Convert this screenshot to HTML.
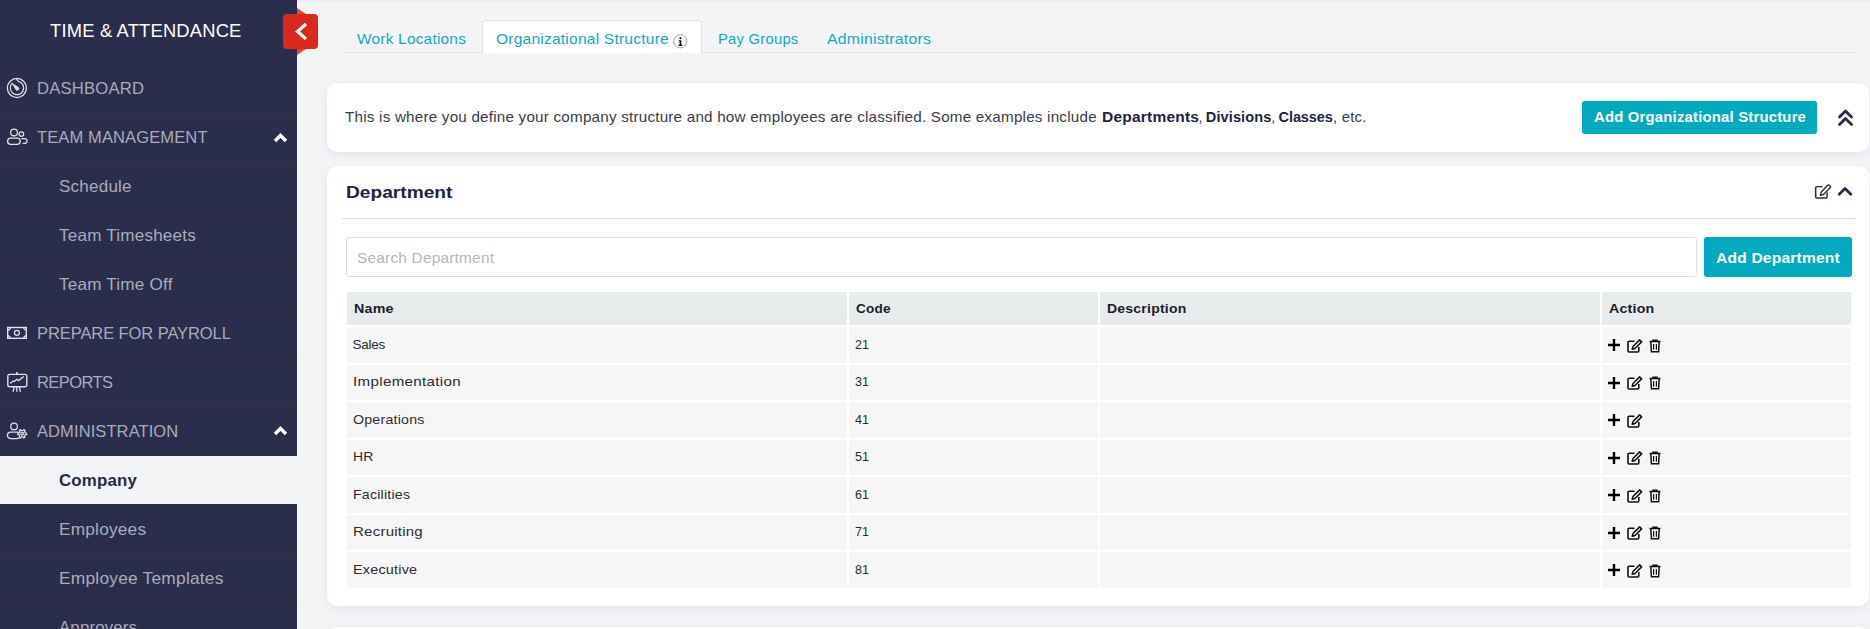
<!DOCTYPE html>
<html><head><meta charset="utf-8">
<style>
*{box-sizing:border-box;margin:0;padding:0}
html,body{width:1870px;height:629px;overflow:hidden;background:#f3f4f6;font-family:"Liberation Sans",sans-serif;}
.tx{position:absolute;white-space:nowrap;line-height:20px;z-index:3;}
#side{position:absolute;left:0;top:0;width:297px;height:629px;background:#2b2e4a;}
.sep{position:absolute;left:0;width:297px;height:1px;background:#343439;}
#act{position:absolute;left:0;top:455.5px;width:297px;height:48.5px;background:#f2f3f5;}
.sic{position:absolute;}
.car{position:absolute;}
#tog{position:absolute;left:283px;top:8px;z-index:5;}
#tabline{position:absolute;left:342px;top:52px;width:1513px;height:1px;background:#e2e4e8;}
#acttab{position:absolute;left:481.5px;top:20px;width:220px;height:33px;background:#fff;border:1px solid #dee2e6;border-bottom:none;border-radius:4px 4px 0 0;}
#info{position:absolute;left:673px;top:34px;z-index:4}
.card{position:absolute;left:327px;width:1542px;background:#fff;border-radius:10px;box-shadow:0 3px 9px rgba(40,60,100,0.075);}
#c1{top:83px;height:69px;}
#c2{top:166px;height:440px;}
#c3{top:627px;height:40px;}
.btn{position:absolute;background:#02aac0;border-radius:3px;}
#topsh{position:absolute;left:297px;top:0;width:1573px;height:3px;background:linear-gradient(#e8e9eb,#f3f4f6);}
#addorgb{left:1582px;top:101px;width:235px;height:33px;}
#dchev{position:absolute;left:1837px;top:108px;}
#hline{position:absolute;left:342px;top:218px;width:1513px;height:1px;background:#dcdde0;}
#search{position:absolute;left:346px;top:237px;width:1351px;height:40px;border:1px solid #dcdde1;border-radius:3px;background:#fff;}
#adddepb{left:1704px;top:237px;width:148px;height:40px;}
#hedit{position:absolute;left:1814px;top:184px;}
#hchev{position:absolute;left:1837px;top:185px;}
.th{position:absolute;top:292px;height:33px;background:#e8ebec;}
.td{position:absolute;height:35.5px;background:#f6f6f6;}
.td svg{position:absolute;top:11.5px;}
.td .ip{top:12px;}
.td .ip{left:6px;}
.td .ie{left:25px;}
.td .it{left:47px;}
</style></head><body>
<div id="side">
<div class="sep" style="top:112px"></div><div class="sep" style="top:161px"></div><div class="sep" style="top:210px"></div><div class="sep" style="top:259px"></div><div class="sep" style="top:308px"></div><div class="sep" style="top:357px"></div><div class="sep" style="top:406px"></div><div class="sep" style="top:553px"></div><div class="sep" style="top:602px"></div>
<div id="act"></div>

<svg class="sic" style="left:5px;top:76px" width="24" height="24" viewBox="0 0 24 24" fill="none" stroke="#dfe0e8" stroke-width="1.25">
 <circle cx="11.9" cy="12" r="9.55"/>
 <path d="M11.5 2.6 C11.9 4.4 12.6 5.3 14.07 5.63 A6.7 6.7 0 1 1 7.52 7.02"/>
 <path d="M7.3 7.4 L10.9 13.8 A1.75 1.75 0 1 0 13.4 11.3 Z" fill="#dfe0e8" stroke-width="0.6"/>
</svg>
<svg class="sic" style="left:5px;top:125px" width="24" height="24" viewBox="0 0 24 24" fill="none" stroke="#dfe0e8" stroke-width="1.25">
 <circle cx="9.05" cy="7.5" r="3.4"/>
 <circle cx="16.4" cy="9.1" r="2.3"/>
 <rect x="2.6" y="13.2" width="12.6" height="6.2" rx="3.1"/>
 <path d="M16.3 13.5 H19.6 a2.4 2.4 0 0 1 0 4.8 H17.6"/>
</svg>
<svg class="sic" style="left:5px;top:321px" width="24" height="24" viewBox="0 0 24 24" fill="none" stroke="#dfe0e8" stroke-width="1.4">
 <rect x="2.7" y="6.5" width="18.6" height="10.8"/>
 <path d="M2.7 9.1 A2.6 2.6 0 0 0 5.3 6.5 M18.7 6.5 A2.6 2.6 0 0 0 21.3 9.1 M21.3 14.7 A2.6 2.6 0 0 0 18.7 17.3 M5.3 17.3 A2.6 2.6 0 0 0 2.7 14.7" stroke-width="1.2"/>
 <circle cx="11.9" cy="11.8" r="2.5" stroke-width="1.3"/>
</svg>
<svg class="sic" style="left:5px;top:370px" width="24" height="24" viewBox="0 0 24 24" fill="none" stroke="#dfe0e8" stroke-width="1.4">
 <rect x="2.8" y="4.4" width="19" height="12.4" rx="2"/>
 <path d="M11.9 2 v2.5" stroke-width="1.6"/>
 <path d="M5.1 13.5 L8 11.1 L9.4 11.3 L11.8 9.3 L13.5 10.6 L18.7 6.5" stroke-width="1.3"/>
 <path d="M9.2 17 L8 21.8 M11.8 17 V21.8 M14.4 17 L15.4 21.8" stroke-width="1.3"/>
</svg>
<svg class="sic" style="left:5px;top:419px" width="24" height="24" viewBox="0 0 24 24" fill="none" stroke="#dfe0e8" stroke-width="1.25">
 <circle cx="9.07" cy="7.4" r="3.3"/>
 <rect x="2.5" y="13.2" width="12.8" height="6.3" rx="3.15"/>
 <path d="M20.26 13.88 L21.64 14.05 L21.64 15.55 L20.26 15.72 L19.53 16.99 L20.07 18.27 L18.77 19.02 L17.93 17.92 L16.47 17.92 L15.63 19.02 L14.33 18.27 L14.87 16.99 L14.14 15.72 L12.76 15.55 L12.76 14.05 L14.14 13.88 L14.87 12.61 L14.33 11.33 L15.63 10.58 L16.47 11.68 L17.93 11.68 L18.77 10.58 L20.07 11.33 L19.53 12.61Z" fill="#2b2e4a" stroke-linejoin="round"/>
 <circle cx="17.2" cy="14.8" r="1.4"/>
</svg>
<svg class="car" style="left:273px;top:132px" width="15" height="11" viewBox="0 0 15 11"><path d="M2 9 L7.5 3.5 L13 9" stroke="#fff" stroke-width="3.4" fill="none"/></svg>
<svg class="car" style="left:273px;top:425px" width="15" height="11" viewBox="0 0 15 11"><path d="M2 9 L7.5 3.5 L13 9" stroke="#fff" stroke-width="3.4" fill="none"/></svg>

</div>
<svg id="tog" width="36" height="48" viewBox="0 0 36 48">
  <path d="M14 0 L23 6 L14 6 Z M14 41 L23 41 L14 47 Z" fill="#e0473d"/>
  <rect x="0" y="6" width="35" height="35" rx="4" fill="#d9291c"/>
  <path d="M23 16 L14.5 23.5 L23 31" stroke="#fff" stroke-width="3.2" fill="none"/>
</svg>
<div id="topsh"></div>
<div id="tabline"></div>
<div id="acttab"></div>
<svg id="info" width="15" height="15" viewBox="0 0 15 15"><circle cx="7.3" cy="7.3" r="6.6" fill="#fff" stroke="#999" stroke-width="0.9"/><circle cx="7.4" cy="4.1" r="1.1" fill="#111"/><path d="M5.6 6.2h2.7v4.6h1.1v1.1h-3.9v-1.1h1.1v-3.5h-1z" fill="#111"/></svg>
<div class="card" id="c1"></div>
<div class="btn" id="addorgb"></div>
<svg id="dchev" width="17" height="19" viewBox="0 0 17 19"><path d="M2.5 9 L8.5 3 L14.5 9 M2.5 16.5 L8.5 10.5 L14.5 16.5" stroke="#272b45" stroke-width="2.8" fill="none" stroke-linecap="round" stroke-linejoin="round"/></svg>
<div class="card" id="c2"></div>
<div id="hline"></div>
<div id="search"></div>
<div class="btn" id="adddepb"></div>
<svg id="hedit" width="17.5" height="15" viewBox="0 0 19 16"><path d="M9.5 2.7H3.2a1.4 1.4 0 0 0-1.4 1.4v9.6a1.4 1.4 0 0 0 1.4 1.4h9.6a1.4 1.4 0 0 0 1.4-1.4V9" fill="none" stroke="#272b45" stroke-width="1.6"/><path d="M14.8 1.3a1.3 1.3 0 0 1 1.8 0l0.9 0.9a1.3 1.3 0 0 1 0 1.8L10.2 11.3l-3.3 0.9 0.9-3.3z" fill="none" stroke="#272b45" stroke-width="1.5" stroke-linejoin="round"/></svg>
<svg id="hchev" width="16" height="12" viewBox="0 0 16 12"><path d="M2.2 9.2 L8 3.4 L13.8 9.2" stroke="#272b45" stroke-width="2.8" fill="none" stroke-linecap="round" stroke-linejoin="round"/></svg>
<div class="card" id="c3"></div>
<div class="th" style="left:347px;width:500px"></div><div class="th" style="left:849px;width:249px"></div><div class="th" style="left:1100px;width:500px"></div><div class="th" style="left:1602px;width:249px"></div><div class="td" style="left:347px;top:327.0px;width:500px"></div><div class="td" style="left:849px;top:327.0px;width:249px"></div><div class="td" style="left:1100px;top:327.0px;width:500px"></div><div class="td" style="left:1602px;top:327.0px;width:249px"><svg class="ip" width="12" height="12" viewBox="0 0 12 12"><path d="M6 0v12M0 6h12" stroke="#000" stroke-width="2.4"/></svg><svg class="ie" width="16" height="14" viewBox="0 0 16 14"><path d="M7.5 2.2H2.2a1.2 1.2 0 0 0-1.2 1.2v8.4a1.2 1.2 0 0 0 1.2 1.2h8.4a1.2 1.2 0 0 0 1.2-1.2V8" fill="none" stroke="#111" stroke-width="1.6"/><path d="M12.6 0.9l2 2-6.6 6.6-2.8 0.8 0.8-2.8z" fill="none" stroke="#111" stroke-width="1.5" stroke-linejoin="round"/></svg><svg class="it" width="12" height="14" viewBox="0 0 12 14"><path d="M0.5 2.6h11M4 2.6V1.2h4v1.4M1.8 2.6l0.6 10.2h7.2l0.6-10.2" fill="none" stroke="#111" stroke-width="1.5"/><path d="M4.6 5v5.8M7.4 5v5.8" stroke="#111" stroke-width="1.2"/></svg></div><div class="td" style="left:347px;top:364.5px;width:500px"></div><div class="td" style="left:849px;top:364.5px;width:249px"></div><div class="td" style="left:1100px;top:364.5px;width:500px"></div><div class="td" style="left:1602px;top:364.5px;width:249px"><svg class="ip" width="12" height="12" viewBox="0 0 12 12"><path d="M6 0v12M0 6h12" stroke="#000" stroke-width="2.4"/></svg><svg class="ie" width="16" height="14" viewBox="0 0 16 14"><path d="M7.5 2.2H2.2a1.2 1.2 0 0 0-1.2 1.2v8.4a1.2 1.2 0 0 0 1.2 1.2h8.4a1.2 1.2 0 0 0 1.2-1.2V8" fill="none" stroke="#111" stroke-width="1.6"/><path d="M12.6 0.9l2 2-6.6 6.6-2.8 0.8 0.8-2.8z" fill="none" stroke="#111" stroke-width="1.5" stroke-linejoin="round"/></svg><svg class="it" width="12" height="14" viewBox="0 0 12 14"><path d="M0.5 2.6h11M4 2.6V1.2h4v1.4M1.8 2.6l0.6 10.2h7.2l0.6-10.2" fill="none" stroke="#111" stroke-width="1.5"/><path d="M4.6 5v5.8M7.4 5v5.8" stroke="#111" stroke-width="1.2"/></svg></div><div class="td" style="left:347px;top:402.0px;width:500px"></div><div class="td" style="left:849px;top:402.0px;width:249px"></div><div class="td" style="left:1100px;top:402.0px;width:500px"></div><div class="td" style="left:1602px;top:402.0px;width:249px"><svg class="ip" width="12" height="12" viewBox="0 0 12 12"><path d="M6 0v12M0 6h12" stroke="#000" stroke-width="2.4"/></svg><svg class="ie" width="16" height="14" viewBox="0 0 16 14"><path d="M7.5 2.2H2.2a1.2 1.2 0 0 0-1.2 1.2v8.4a1.2 1.2 0 0 0 1.2 1.2h8.4a1.2 1.2 0 0 0 1.2-1.2V8" fill="none" stroke="#111" stroke-width="1.6"/><path d="M12.6 0.9l2 2-6.6 6.6-2.8 0.8 0.8-2.8z" fill="none" stroke="#111" stroke-width="1.5" stroke-linejoin="round"/></svg></div><div class="td" style="left:347px;top:439.5px;width:500px"></div><div class="td" style="left:849px;top:439.5px;width:249px"></div><div class="td" style="left:1100px;top:439.5px;width:500px"></div><div class="td" style="left:1602px;top:439.5px;width:249px"><svg class="ip" width="12" height="12" viewBox="0 0 12 12"><path d="M6 0v12M0 6h12" stroke="#000" stroke-width="2.4"/></svg><svg class="ie" width="16" height="14" viewBox="0 0 16 14"><path d="M7.5 2.2H2.2a1.2 1.2 0 0 0-1.2 1.2v8.4a1.2 1.2 0 0 0 1.2 1.2h8.4a1.2 1.2 0 0 0 1.2-1.2V8" fill="none" stroke="#111" stroke-width="1.6"/><path d="M12.6 0.9l2 2-6.6 6.6-2.8 0.8 0.8-2.8z" fill="none" stroke="#111" stroke-width="1.5" stroke-linejoin="round"/></svg><svg class="it" width="12" height="14" viewBox="0 0 12 14"><path d="M0.5 2.6h11M4 2.6V1.2h4v1.4M1.8 2.6l0.6 10.2h7.2l0.6-10.2" fill="none" stroke="#111" stroke-width="1.5"/><path d="M4.6 5v5.8M7.4 5v5.8" stroke="#111" stroke-width="1.2"/></svg></div><div class="td" style="left:347px;top:477.0px;width:500px"></div><div class="td" style="left:849px;top:477.0px;width:249px"></div><div class="td" style="left:1100px;top:477.0px;width:500px"></div><div class="td" style="left:1602px;top:477.0px;width:249px"><svg class="ip" width="12" height="12" viewBox="0 0 12 12"><path d="M6 0v12M0 6h12" stroke="#000" stroke-width="2.4"/></svg><svg class="ie" width="16" height="14" viewBox="0 0 16 14"><path d="M7.5 2.2H2.2a1.2 1.2 0 0 0-1.2 1.2v8.4a1.2 1.2 0 0 0 1.2 1.2h8.4a1.2 1.2 0 0 0 1.2-1.2V8" fill="none" stroke="#111" stroke-width="1.6"/><path d="M12.6 0.9l2 2-6.6 6.6-2.8 0.8 0.8-2.8z" fill="none" stroke="#111" stroke-width="1.5" stroke-linejoin="round"/></svg><svg class="it" width="12" height="14" viewBox="0 0 12 14"><path d="M0.5 2.6h11M4 2.6V1.2h4v1.4M1.8 2.6l0.6 10.2h7.2l0.6-10.2" fill="none" stroke="#111" stroke-width="1.5"/><path d="M4.6 5v5.8M7.4 5v5.8" stroke="#111" stroke-width="1.2"/></svg></div><div class="td" style="left:347px;top:514.5px;width:500px"></div><div class="td" style="left:849px;top:514.5px;width:249px"></div><div class="td" style="left:1100px;top:514.5px;width:500px"></div><div class="td" style="left:1602px;top:514.5px;width:249px"><svg class="ip" width="12" height="12" viewBox="0 0 12 12"><path d="M6 0v12M0 6h12" stroke="#000" stroke-width="2.4"/></svg><svg class="ie" width="16" height="14" viewBox="0 0 16 14"><path d="M7.5 2.2H2.2a1.2 1.2 0 0 0-1.2 1.2v8.4a1.2 1.2 0 0 0 1.2 1.2h8.4a1.2 1.2 0 0 0 1.2-1.2V8" fill="none" stroke="#111" stroke-width="1.6"/><path d="M12.6 0.9l2 2-6.6 6.6-2.8 0.8 0.8-2.8z" fill="none" stroke="#111" stroke-width="1.5" stroke-linejoin="round"/></svg><svg class="it" width="12" height="14" viewBox="0 0 12 14"><path d="M0.5 2.6h11M4 2.6V1.2h4v1.4M1.8 2.6l0.6 10.2h7.2l0.6-10.2" fill="none" stroke="#111" stroke-width="1.5"/><path d="M4.6 5v5.8M7.4 5v5.8" stroke="#111" stroke-width="1.2"/></svg></div><div class="td" style="left:347px;top:552.0px;width:500px"></div><div class="td" style="left:849px;top:552.0px;width:249px"></div><div class="td" style="left:1100px;top:552.0px;width:500px"></div><div class="td" style="left:1602px;top:552.0px;width:249px"><svg class="ip" width="12" height="12" viewBox="0 0 12 12"><path d="M6 0v12M0 6h12" stroke="#000" stroke-width="2.4"/></svg><svg class="ie" width="16" height="14" viewBox="0 0 16 14"><path d="M7.5 2.2H2.2a1.2 1.2 0 0 0-1.2 1.2v8.4a1.2 1.2 0 0 0 1.2 1.2h8.4a1.2 1.2 0 0 0 1.2-1.2V8" fill="none" stroke="#111" stroke-width="1.6"/><path d="M12.6 0.9l2 2-6.6 6.6-2.8 0.8 0.8-2.8z" fill="none" stroke="#111" stroke-width="1.5" stroke-linejoin="round"/></svg><svg class="it" width="12" height="14" viewBox="0 0 12 14"><path d="M0.5 2.6h11M4 2.6V1.2h4v1.4M1.8 2.6l0.6 10.2h7.2l0.6-10.2" fill="none" stroke="#111" stroke-width="1.5"/><path d="M4.6 5v5.8M7.4 5v5.8" stroke="#111" stroke-width="1.2"/></svg></div>
<span id="brand" class="tx" style="left:50px;top:21px;font-size:18px;font-weight:normal;color:#ffffff;letter-spacing:0.200px;transform:scaleX(1.0182);transform-origin:0 0;">TIME &amp; ATTENDANCE</span><span id="dash" class="tx" style="left:37px;top:78px;font-size:16.5px;font-weight:normal;color:#a9abbb;letter-spacing:0.200px;transform:scaleX(1.0076);transform-origin:0 0;">DASHBOARD</span><span id="team" class="tx" style="left:37px;top:127px;font-size:16.5px;font-weight:normal;color:#a9abbb;letter-spacing:0.129px;">TEAM MANAGEMENT</span><span id="sched" class="tx" style="left:59px;top:175.5px;font-size:16.5px;font-weight:normal;color:#a9abbb;letter-spacing:0.200px;transform:scaleX(1.0339);transform-origin:0 0;">Schedule</span><span id="tts" class="tx" style="left:59px;top:224.5px;font-size:16.5px;font-weight:normal;color:#a9abbb;letter-spacing:0.200px;transform:scaleX(1.0352);transform-origin:0 0;">Team Timesheets</span><span id="tto" class="tx" style="left:59px;top:273.5px;font-size:16.5px;font-weight:normal;color:#a9abbb;letter-spacing:0.200px;transform:scaleX(1.0373);transform-origin:0 0;">Team Time Off</span><span id="payroll" class="tx" style="left:37px;top:323px;font-size:16.5px;font-weight:normal;color:#a9abbb;letter-spacing:-0.079px;">PREPARE FOR PAYROLL</span><span id="reports" class="tx" style="left:37px;top:372px;font-size:16.5px;font-weight:normal;color:#a9abbb;letter-spacing:-0.560px;">REPORTS</span><span id="admin" class="tx" style="left:37px;top:421px;font-size:16.5px;font-weight:normal;color:#a9abbb;letter-spacing:0.098px;">ADMINISTRATION</span><span id="company" class="tx" style="left:59px;top:469.5px;font-size:16.5px;font-weight:bold;color:#272b45;letter-spacing:0.200px;transform:scaleX(1.0207);transform-origin:0 0;">Company</span><span id="emps" class="tx" style="left:59px;top:518.5px;font-size:16.5px;font-weight:normal;color:#a9abbb;letter-spacing:0.200px;transform:scaleX(1.0455);transform-origin:0 0;">Employees</span><span id="empt" class="tx" style="left:59px;top:567.5px;font-size:16.5px;font-weight:normal;color:#a9abbb;letter-spacing:0.200px;transform:scaleX(1.0521);transform-origin:0 0;">Employee Templates</span><span id="appr" class="tx" style="left:59px;top:616.5px;font-size:16.5px;font-weight:normal;color:#a9abbb;letter-spacing:0.200px;transform:scaleX(1.0150);transform-origin:0 0;">Approvers</span><span id="worklocs" class="tx" style="left:357px;top:28.5px;font-size:14.5px;font-weight:normal;color:#17a8c0;letter-spacing:0.200px;transform:scaleX(1.0645);transform-origin:0 0;">Work Locations</span><span id="orgs" class="tx" style="left:496px;top:28.5px;font-size:14.5px;font-weight:normal;color:#17a8c0;letter-spacing:0.200px;transform:scaleX(1.0728);transform-origin:0 0;">Organizational Structure</span><span id="payg" class="tx" style="left:717.5px;top:28.5px;font-size:14.5px;font-weight:normal;color:#17a8c0;letter-spacing:0.200px;transform:scaleX(1.0245);transform-origin:0 0;">Pay Groups</span><span id="admins" class="tx" style="left:827px;top:28.5px;font-size:14.5px;font-weight:normal;color:#17a8c0;letter-spacing:0.200px;transform:scaleX(1.0904);transform-origin:0 0;">Administrators</span><span id="desc1" class="tx" style="left:345px;top:107px;font-size:14.5px;font-weight:normal;color:#3a3c48;letter-spacing:0.200px;transform:scaleX(1.0498);transform-origin:0 0;">This is where you define your company structure and how employees are classified. Some examples include</span><span id="b1" class="tx" style="left:1101.5px;top:107px;font-size:14.5px;font-weight:bold;color:#1f2340;letter-spacing:0.200px;transform:scaleX(1.0699);transform-origin:0 0;">Departments</span><span id="k1" class="tx" style="left:1198.4px;top:107px;font-size:14.5px;font-weight:normal;color:#3a3c48;letter-spacing:0.000px;">,</span><span id="b2" class="tx" style="left:1205.8px;top:107px;font-size:14.5px;font-weight:bold;color:#1f2340;letter-spacing:0.125px;">Divisions</span><span id="k2" class="tx" style="left:1271.2px;top:107px;font-size:14.5px;font-weight:normal;color:#3a3c48;letter-spacing:0.000px;">,</span><span id="b3" class="tx" style="left:1278.6px;top:107px;font-size:14.5px;font-weight:bold;color:#1f2340;letter-spacing:-0.109px;">Classes</span><span id="k3" class="tx" style="left:1332.7px;top:107px;font-size:14.5px;font-weight:normal;color:#3a3c48;letter-spacing:0.200px;transform:scaleX(1.0296);transform-origin:0 0;">, etc.</span><span id="addorg" class="tx" style="left:1594px;top:107px;font-size:14.5px;font-weight:bold;color:#ffffff;letter-spacing:0.200px;transform:scaleX(1.0245);transform-origin:0 0;">Add Organizational Structure</span><span id="dept" class="tx" style="left:346px;top:181.5px;font-size:16.5px;font-weight:bold;color:#1f2340;letter-spacing:0.000px;transform:scaleX(1.16);transform-origin:0 0;">Department</span><span id="ph" class="tx" style="left:356.5px;top:248px;font-size:14.5px;font-weight:normal;color:#b4b6bc;letter-spacing:0.200px;transform:scaleX(1.0621);transform-origin:0 0;">Search Department</span><span id="adddep" class="tx" style="left:1716px;top:248px;font-size:14.5px;font-weight:bold;color:#ffffff;letter-spacing:0.200px;transform:scaleX(1.0722);transform-origin:0 0;">Add Department</span><span id="th1" class="tx" style="left:353.5px;top:299px;font-size:13.5px;font-weight:bold;color:#1b1d2b;letter-spacing:0.200px;transform:scaleX(1.0565);transform-origin:0 0;">Name</span><span id="th2" class="tx" style="left:855.5px;top:299px;font-size:13.5px;font-weight:bold;color:#1b1d2b;letter-spacing:0.200px;transform:scaleX(1.0045);transform-origin:0 0;">Code</span><span id="th3" class="tx" style="left:1106.5px;top:299px;font-size:13.5px;font-weight:bold;color:#1b1d2b;letter-spacing:0.200px;transform:scaleX(1.0392);transform-origin:0 0;">Description</span><span id="th4" class="tx" style="left:1608.5px;top:299px;font-size:13.5px;font-weight:bold;color:#1b1d2b;letter-spacing:0.200px;transform:scaleX(1.0526);transform-origin:0 0;">Action</span><span id="r0n" class="tx" style="left:352.5px;top:334.5px;font-size:13.5px;font-weight:normal;color:#2b2c33;letter-spacing:-0.255px;">Sales</span><span id="r0c" class="tx" style="left:854.5px;top:334.5px;font-size:13.5px;font-weight:normal;color:#2b2c33;letter-spacing:0.000px;transform:scaleX(0.93);transform-origin:0 0;">21</span><span id="r1n" class="tx" style="left:352.5px;top:372.0px;font-size:13.5px;font-weight:normal;color:#2b2c33;letter-spacing:0.296px;transform:scaleX(1.1200);transform-origin:0 0;">Implementation</span><span id="r1c" class="tx" style="left:854.5px;top:372.0px;font-size:13.5px;font-weight:normal;color:#2b2c33;letter-spacing:0.000px;transform:scaleX(0.93);transform-origin:0 0;">31</span><span id="r2n" class="tx" style="left:352.5px;top:409.5px;font-size:13.5px;font-weight:normal;color:#2b2c33;letter-spacing:0.200px;transform:scaleX(1.0516);transform-origin:0 0;">Operations</span><span id="r2c" class="tx" style="left:854.5px;top:409.5px;font-size:13.5px;font-weight:normal;color:#2b2c33;letter-spacing:0.000px;transform:scaleX(0.93);transform-origin:0 0;">41</span><span id="r3n" class="tx" style="left:352.5px;top:447.0px;font-size:13.5px;font-weight:normal;color:#2b2c33;letter-spacing:0.200px;transform:scaleX(1.0343);transform-origin:0 0;">HR</span><span id="r3c" class="tx" style="left:854.5px;top:447.0px;font-size:13.5px;font-weight:normal;color:#2b2c33;letter-spacing:0.000px;transform:scaleX(0.93);transform-origin:0 0;">51</span><span id="r4n" class="tx" style="left:352.5px;top:484.5px;font-size:13.5px;font-weight:normal;color:#2b2c33;letter-spacing:0.200px;transform:scaleX(1.0493);transform-origin:0 0;">Facilities</span><span id="r4c" class="tx" style="left:854.5px;top:484.5px;font-size:13.5px;font-weight:normal;color:#2b2c33;letter-spacing:0.000px;transform:scaleX(0.93);transform-origin:0 0;">61</span><span id="r5n" class="tx" style="left:352.5px;top:522.0px;font-size:13.5px;font-weight:normal;color:#2b2c33;letter-spacing:0.200px;transform:scaleX(1.1135);transform-origin:0 0;">Recruiting</span><span id="r5c" class="tx" style="left:854.5px;top:522.0px;font-size:13.5px;font-weight:normal;color:#2b2c33;letter-spacing:0.000px;transform:scaleX(0.93);transform-origin:0 0;">71</span><span id="r6n" class="tx" style="left:352.5px;top:559.5px;font-size:13.5px;font-weight:normal;color:#2b2c33;letter-spacing:0.200px;transform:scaleX(1.0662);transform-origin:0 0;">Executive</span><span id="r6c" class="tx" style="left:854.5px;top:559.5px;font-size:13.5px;font-weight:normal;color:#2b2c33;letter-spacing:0.000px;transform:scaleX(0.93);transform-origin:0 0;">81</span>
</body></html>
